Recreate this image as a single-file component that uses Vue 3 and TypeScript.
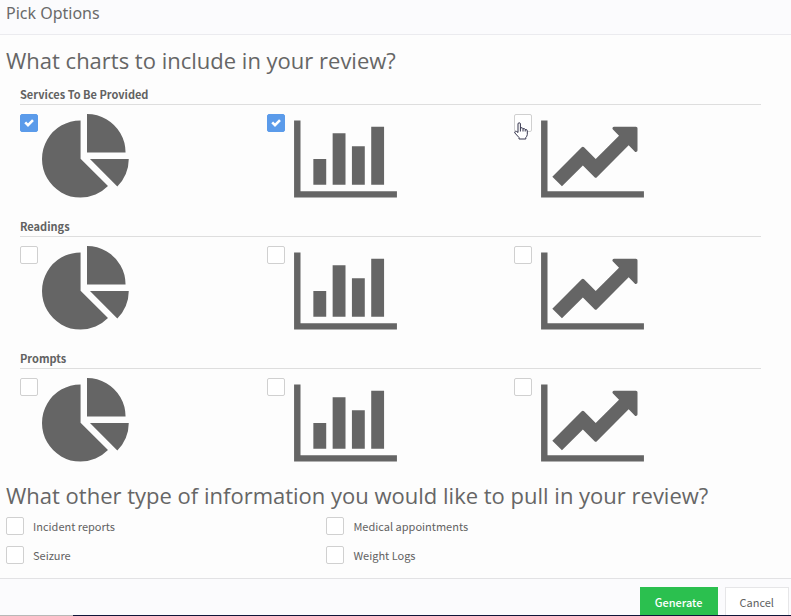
<script setup lang="ts">
import { reactive } from 'vue'

type ChartKind = 'pie' | 'bar' | 'line'

interface ChartSection {
  id: string
  title: string
  picks: Record<ChartKind, boolean>
}

interface InfoOption {
  id: string
  label: string
  checked: boolean
}

const kinds: ChartKind[] = ['pie', 'bar', 'line']

const sections = reactive<ChartSection[]>([
  { id: 'services', title: 'Services To Be Provided', picks: { pie: true, bar: true, line: false } },
  { id: 'readings', title: 'Readings', picks: { pie: false, bar: false, line: false } },
  { id: 'prompts', title: 'Prompts', picks: { pie: false, bar: false, line: false } },
])

const options = reactive<InfoOption[]>([
  { id: 'incident', label: 'Incident reports', checked: false },
  { id: 'medical', label: 'Medical appointments', checked: false },
  { id: 'seizure', label: 'Seizure', checked: false },
  { id: 'weight', label: 'Weight Logs', checked: false },
])

const paths: Record<ChartKind, string> = {
  pie: 'M768 890l546 546q-106 108-247.5 168T768 1664q-209 0-385.5-103T103 1281.5 0 896t103-385.5T382.5 231 768 128v762zm187 6h773q0 157-60 298.5T1500 1442zm709-128H896V0q209 0 385.5 103T1561 382.5 1664 768z',
  bar: 'M640 896v512H384V896h256zm384-512v1024H768V384h256zm1024 1152v128H0V128h128v1408h1920zm-640-896v768h-256V640h256zm384-384v1152h-256V256h256z',
  line: 'M2048 1536v128H0V128h128v1408h1920zM1920 288v435q0 21-19.5 29.5t-35.5-7.5l-121-121-633 633q-10 10-23 10t-23-10l-233-233-416 416-192-192 585-585q10-10 23-10t23 10l233 233 464-464-121-121q-16-16-7.5-35.5t29.5-19.5h435q14 0 23 9t9 23z',
}
</script>

<template>
  <form class="dialog" @submit.prevent>
    <header class="dialog-header">
      <h1>Pick Options</h1>
    </header>

    <main class="dialog-body">
      <h2>What charts to include in your review?</h2>
      <div class="sections">
        <section v-for="section in sections" :key="section.id" class="section">
          <h3 :id="section.id">{{ section.title }}</h3>
          <div class="charts" role="group" :aria-labelledby="section.id">
            <label v-for="kind in kinds" :key="kind" class="chart">
              <span class="tick">
                <input v-model="section.picks[kind]" type="checkbox" />
                <svg v-if="section.picks[kind]" class="mark" viewBox="0 0 18 18" aria-hidden="true">
                  <path d="M5.2 8.4 L8 11.2 L13 6.2" />
                </svg>
              </span>
              <svg
                class="icon"
                :class="{ wide: kind !== 'pie' }"
                :viewBox="kind === 'pie' ? '0 0 1792 1792' : '0 0 2048 1792'"
                aria-hidden="true"
              >
                <path :d="paths[kind]" />
              </svg>
              <svg
                v-if="section.id === 'services' && kind === 'line'"
                class="pointer"
                viewBox="0 0 14 18"
                aria-hidden="true"
              >
                <path
                  d="M4 10.5V2Q4 .8 5.2 .8T6.4 2V6Q8.6 5 9 6.8Q10.8 6 11.2 7.6Q13.2 7 13.3 9V12.5Q13 14.5 11.8 15.5V17H5V15.5L.9 11Q.3 9.6 1.4 9.3Q2.4 9 4 10.5M6.4 6V9.5M9 6.8V9.5M11.2 7.6V9.5"
                />
              </svg>
            </label>
          </div>
        </section>
      </div>

      <h2>What other type of information you would like to pull in your review?</h2>
      <div class="options">
        <label v-for="option in options" :key="option.id" class="option">
          <span class="tick">
            <input v-model="option.checked" type="checkbox" />
            <svg v-if="option.checked" class="mark" viewBox="0 0 18 18" aria-hidden="true">
              <path d="M5.2 8.4 L8 11.2 L13 6.2" />
            </svg>
          </span>
          <span>{{ option.label }}</span>
        </label>
      </div>
    </main>

    <footer class="dialog-footer">
      <button type="submit" class="generate">Generate</button>
      <button type="button" class="cancel">Cancel</button>
    </footer>
    <div class="edge"></div>
  </form>
</template>

<style>
body {
  margin: 0;
  background: #fdfdfd;
}
</style>

<style scoped>
.dialog {
  color: #626262;
  font-family: 'Noto Sans CJK SC', 'Noto Sans', sans-serif;
  font-size: 11px;
  line-height: 18px;
}

.dialog-header {
  padding: 1px 6px 9px;
  border-bottom: 1px solid #ebebef;
  background: #fbfbfd;
}

h1,
h2,
h3 {
  margin: 0;
}

h1 {
  color: #6a6a6a;
  font-family: 'Noto Sans', sans-serif;
  font-size: 16px;
  font-weight: 400;
  line-height: 24px;
}

.dialog-body {
  padding: 9px 0 14px;
}

h2 {
  padding: 0 6px;
  color: #666;
  font-family: 'Open Sans', sans-serif;
  font-size: 22px;
  font-weight: 400;
  line-height: 32px;
}

.sections {
  display: grid;
  gap: 13px;
  padding: 9px 30px 11px 20px;
}

h3 {
  border-bottom: 1px solid #dedede;
  font-size: 11px;
  font-weight: 700;
  line-height: 19px;
}

.charts {
  display: grid;
  grid-template-columns: repeat(3, 1fr);
  padding-top: 9px;
}

.chart {
  position: relative;
  display: flex;
  align-items: flex-start;
  gap: 4px;
}

.tick {
  display: grid;
  flex: none;
  width: 18px;
  height: 18px;
}

.tick > * {
  grid-area: 1 / 1;
}

.tick input {
  appearance: none;
  box-sizing: border-box;
  width: 18px;
  height: 18px;
  margin: 0;
  border: 1px solid #d0d0d0;
  border-radius: 2px;
  background: #fff;
}

.tick input:checked {
  border-color: #5b9bea;
  background: #5b9bea;
}

.mark {
  width: 18px;
  height: 18px;
  fill: none;
  stroke: #fff;
  stroke-width: 2.6;
  pointer-events: none;
}

.icon {
  display: block;
  width: 90px;
  height: 90px;
  fill: #656565;
}

.icon.wide {
  width: 103px;
  margin-left: 5px;
}

.pointer {
  position: absolute;
  top: 8px;
  left: 0;
  width: 14px;
  height: 18px;
  fill: #fff;
  stroke: #35354d;
  stroke-width: 1;
}

.options {
  display: grid;
  grid-template-columns: 5fr 7fr;
  row-gap: 11px;
  padding: 6px 16px 0 6px;
}

.option {
  display: flex;
  align-items: center;
  gap: 9px;
}

.dialog-footer {
  display: flex;
  justify-content: flex-end;
  gap: 7px;
  padding: 8px 2px 0 6px;
  border-top: 1px solid #e2e2e4;
  background: #fbfbfd;
}

button {
  height: 28px;
  padding: 0 14px;
  border: 1px solid #e6e6e8;
  border-bottom: 0;
  background: #fff;
  color: #626262;
  font: inherit;
}

.generate {
  border-color: #2bc04f;
  background: #2bc04f;
  color: #fff;
  font-weight: 500;
}

.edge {
  height: 1px;
  background: linear-gradient(to right, #b8b8b8 73px, #10163a 73px);
}
</style>
